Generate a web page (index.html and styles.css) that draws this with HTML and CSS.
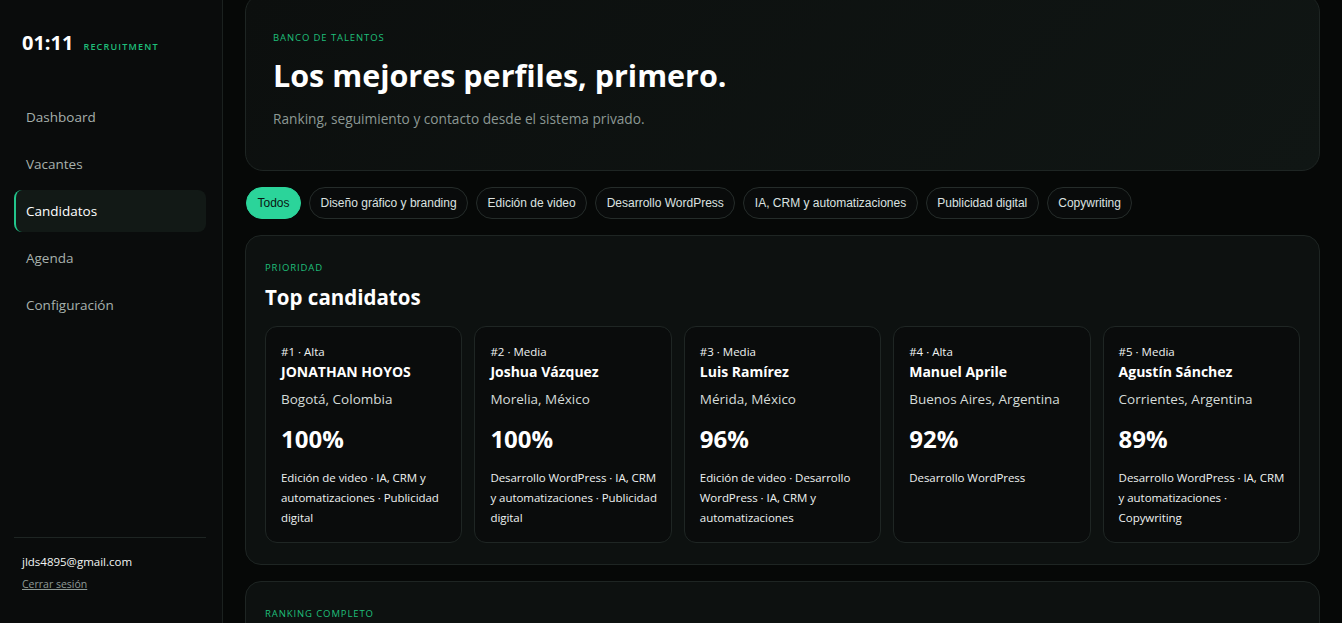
FILE: index.html
```html
<!DOCTYPE html>
<html lang="es">
<head>
    <meta charset="UTF-8">
    <meta name="viewport" content="width=device-width, initial-scale=1.0">
    <title>Candidatos · 01:11 Recruitment</title>
    <link rel="stylesheet" href="styles.css">
</head>
<body>
    <div class="layout">
        <aside class="sidebar">
            <div class="brand">
                <span class="brand-time">01:11</span>
                <span class="brand-tag">RECRUITMENT</span>
            </div>

            <nav class="nav">
                <a href="#" class="nav-item">Dashboard</a>
                <a href="#" class="nav-item">Vacantes</a>
                <a href="#" class="nav-item active">Candidatos</a>
                <a href="#" class="nav-item">Agenda</a>
                <a href="#" class="nav-item">Configuración</a>
            </nav>

            <div class="session">
                <div class="session-email">jlds4895@gmail.com</div>
                <a href="#" class="session-logout">Cerrar sesión</a>
            </div>
        </aside>

        <main class="main" id="main">
            <section class="hero">
                <div class="eyebrow">BANCO DE TALENTOS</div>
                <h1>Los mejores perfiles, primero.</h1>
                <p class="hero-sub">Ranking, seguimiento y contacto desde el sistema privado.</p>
            </section>

            <div class="filters">
                <button class="chip active">Todos</button>
                <button class="chip">Diseño gráfico y branding</button>
                <button class="chip">Edición de video</button>
                <button class="chip">Desarrollo WordPress</button>
                <button class="chip">IA, CRM y automatizaciones</button>
                <button class="chip">Publicidad digital</button>
                <button class="chip">Copywriting</button>
            </div>

            <section class="panel">
                <div class="eyebrow">PRIORIDAD</div>
                <h2>Top candidatos</h2>

                <div class="top-grid">
                    <article class="cand">
                        <div class="cand-rank">#1 · Alta</div>
                        <div class="cand-name">JONATHAN HOYOS</div>
                        <div class="cand-city">Bogotá, Colombia</div>
                        <div class="cand-score">100%</div>
                        <div class="cand-tags">Edición de video · IA, CRM y automatizaciones · Publicidad digital</div>
                    </article>
                    <article class="cand">
                        <div class="cand-rank">#2 · Media</div>
                        <div class="cand-name">Joshua Vázquez</div>
                        <div class="cand-city">Morelia, México</div>
                        <div class="cand-score">100%</div>
                        <div class="cand-tags">Desarrollo WordPress · IA, CRM y automatizaciones · Publicidad digital</div>
                    </article>
                    <article class="cand">
                        <div class="cand-rank">#3 · Media</div>
                        <div class="cand-name">Luis Ramírez</div>
                        <div class="cand-city">Mérida, México</div>
                        <div class="cand-score">96%</div>
                        <div class="cand-tags">Edición de video · Desarrollo WordPress · IA, CRM y automatizaciones</div>
                    </article>
                    <article class="cand">
                        <div class="cand-rank">#4 · Alta</div>
                        <div class="cand-name">Manuel Aprile</div>
                        <div class="cand-city">Buenos Aires, Argentina</div>
                        <div class="cand-score">92%</div>
                        <div class="cand-tags">Desarrollo WordPress</div>
                    </article>
                    <article class="cand">
                        <div class="cand-rank">#5 · Media</div>
                        <div class="cand-name">Agustín Sánchez</div>
                        <div class="cand-city">Corrientes, Argentina</div>
                        <div class="cand-score">89%</div>
                        <div class="cand-tags">Desarrollo WordPress · IA, CRM y automatizaciones · Copywriting</div>
                    </article>
                </div>
            </section>

            <section class="panel">
                <div class="eyebrow">RANKING COMPLETO</div>
                <h2>Todos los candidatos</h2>
                <div class="ranking-empty">Cargando ranking…</div>
            </section>
        </main>
    </div>

    <script>
        // el contenido abre un poco desplazado, el sidebar queda fijo
        document.getElementById('main').scrollTop = 30;
    </script>
</body>
</html>
```

FILE: styles.css
```css
* {
    box-sizing: border-box;
}

body {
    margin: 0;
    background: #060807;
    color: #f2f5f4;
    font-family: 'Open Sans', 'Noto Sans', sans-serif;
    overflow: hidden;
}

.layout {
    display: grid;
    grid-template-columns: 223px 1fr;
    height: 100vh;
}

/* Sidebar */
.sidebar {
    display: flex;
    flex-direction: column;
    background: #0a0c0c;
    border-right: 1px solid #1b211f;
    padding: 28px 16px 30px 14px;
}

.brand {
    display: flex;
    align-items: baseline;
    gap: 10px;
    padding-left: 8px;
    line-height: 30px;
}

.brand-time {
    font-size: 20px;
    font-weight: 700;
    color: #ffffff;
}

.brand-tag {
    font-size: 9px;
    letter-spacing: 1.2px;
    color: #1fbf7a;
    font-weight: 600;
}

.nav {
    display: flex;
    flex-direction: column;
    gap: 5px;
    margin-top: 34px;
}

.nav-item {
    display: flex;
    align-items: center;
    height: 42px;
    padding: 0 10px;
    border-left: 2px solid transparent;
    border-radius: 8px;
    color: #a7b1ad;
    font-size: 13.5px;
    text-decoration: none;
}

.nav-item.active {
    background: #121916;
    border-left-color: #22c58b;
    color: #ffffff;
}

.session {
    margin-top: auto;
    border-top: 1px solid #1e2523;
    padding: 15px 0 0 8px;
}

.session-email {
    font-size: 11.5px;
    line-height: 18px;
    color: #f2f5f4;
}

.session-logout {
    display: inline-block;
    margin-top: 3px;
    font-size: 10.5px;
    color: #8f9a96;
}

/* Main column */
.main {
    display: flex;
    flex-direction: column;
    gap: 16px;
    padding: 24px 22px 40px 22px;
    overflow-y: auto;
    scrollbar-width: none;
}

.main::-webkit-scrollbar {
    display: none;
}

.eyebrow {
    font-size: 9.5px;
    letter-spacing: 0.9px;
    line-height: 16px;
    color: #1fbf7a;
}

.hero {
    flex-shrink: 0;
    background: linear-gradient(135deg, #0c0f0e 0%, #101614 100%);
    border: 1px solid #1e2523;
    border-radius: 18px;
    padding: 35px 27px 41px 27px;
}

.hero h1 {
    margin: 9px 0 0 0;
    font-size: 30.5px;
    line-height: 40px;
    font-weight: 700;
    color: #ffffff;
}

.hero-sub {
    margin: 14px 0 0 0;
    font-size: 13.7px;
    line-height: 20px;
    color: #8c9894;
}

.filters {
    display: flex;
    flex-wrap: wrap;
    gap: 8px;
    padding-left: 1px;
}

.chip {
    height: 32px;
    padding: 0 10.5px;
    border: 1px solid #252c2a;
    border-radius: 999px;
    background: #090b0b;
    color: #dce2e0;
    font-family: 'Liberation Sans', Arial, sans-serif;
    font-size: 12px;
    cursor: pointer;
}

.chip.active {
    background: #2bd49a;
    border-color: #2bd49a;
    color: #0a1511;
}

.panel {
    flex-shrink: 0;
    background: #0d1110;
    border: 1px solid #1e2523;
    border-radius: 16px;
    padding: 24px 19px 21px 19px;
}

.panel h2 {
    margin: 7px 0 0 0;
    font-size: 20.5px;
    line-height: 28px;
    font-weight: 700;
    color: #ffffff;
}

.top-grid {
    display: grid;
    grid-template-columns: repeat(5, 1fr);
    gap: 12px;
    margin-top: 15px;
}

.cand {
    background: #0a0c0c;
    border: 1px solid #1f2624;
    border-radius: 12px;
    padding: 17px 13px 14px 15px;
}

.cand-rank {
    font-size: 11.5px;
    line-height: 16px;
    color: #eef2f1;
}

.cand-name {
    margin-top: 2px;
    font-size: 14px;
    line-height: 20px;
    font-weight: 700;
    color: #ffffff;
}

.cand-city {
    margin-top: 7px;
    font-size: 13.5px;
    line-height: 20px;
    color: #d4dbd8;
}

.cand-score {
    margin-top: 15px;
    font-size: 24px;
    line-height: 30px;
    font-weight: 700;
    color: #ffffff;
}

.cand-tags {
    margin-top: 14px;
    font-size: 11.5px;
    line-height: 20px;
    letter-spacing: -0.05px;
    color: #eef2f1;
}

.ranking-empty {
    margin-top: 16px;
    font-size: 13px;
    color: #8c9894;
    height: 200px;
}
```
